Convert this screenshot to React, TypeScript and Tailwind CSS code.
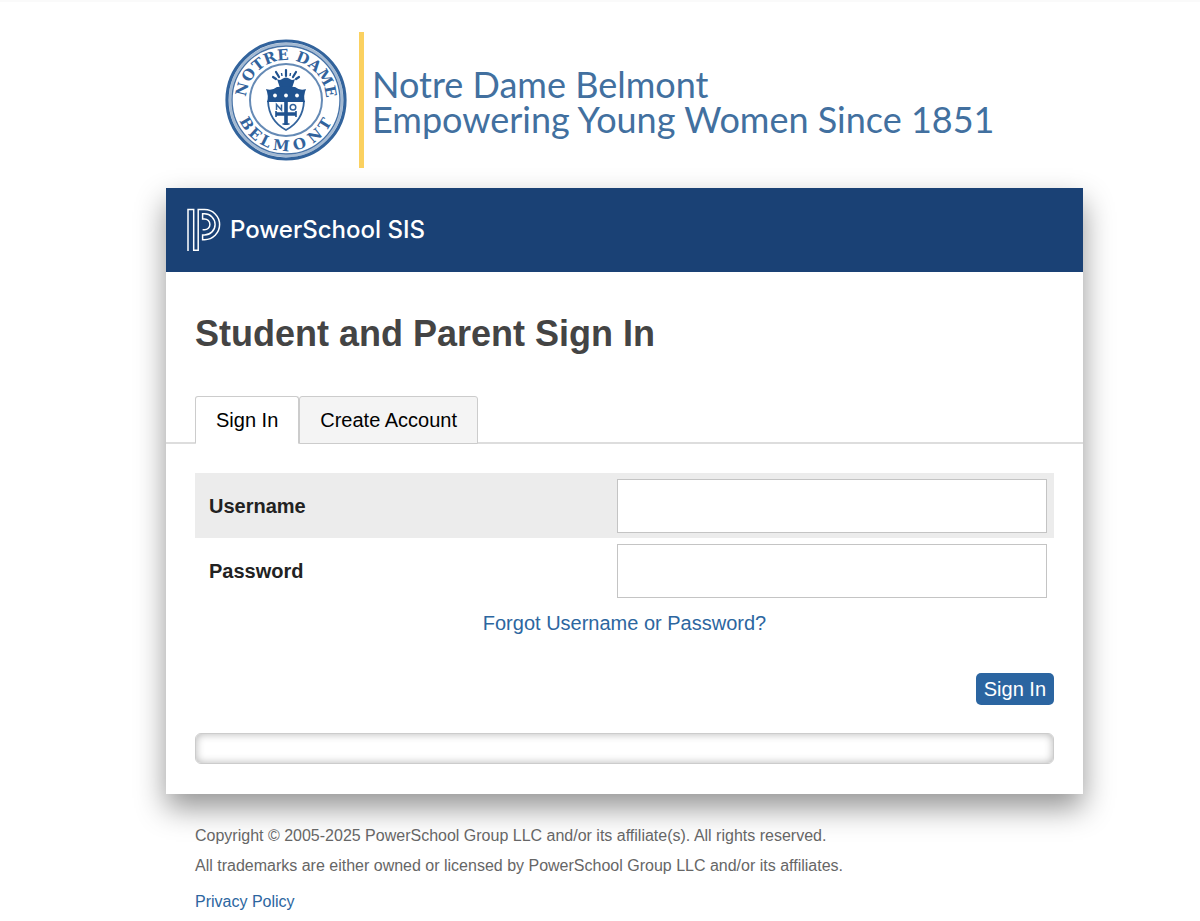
import React, { useState } from "react";

const TABS = ["Sign In", "Create Account"];

// Letters round the school seal, each with its angle in degrees
const SEAL_TOP = [
  { char: "N", angle: -76 },
  { char: "O", angle: -56 },
  { char: "T", angle: -38 },
  { char: "R", angle: -21 },
  { char: "E", angle: -4 },
  { char: "D", angle: 22 },
  { char: "A", angle: 40 },
  { char: "M", angle: 60 },
  { char: "E", angle: 79 },
];

const SEAL_BOTTOM = [
  { char: "B", angle: 59 },
  { char: "E", angle: 42 },
  { char: "L", angle: 26 },
  { char: "M", angle: 6 },
  { char: "O", angle: -17 },
  { char: "N", angle: -39 },
  { char: "T", angle: -58 },
];

const SchoolSeal: React.FC = () => (
  <svg viewBox="-61 -61 122 122" className="h-[122px] w-[122px] shrink-0" role="img" aria-label="Notre Dame Belmont seal">
    <g fill="none" stroke="#32639c">
      <circle r="59" strokeWidth="3.2" />
      <circle r="56" strokeWidth="2.4" opacity="0.45" />
      <circle r="54" strokeWidth="1.4" opacity="0.9" />
      <circle r="36" strokeWidth="2" opacity="0.75" />
    </g>
    <g fill="#32639c" fontFamily="'DejaVu Serif', serif" fontSize="15" fontWeight="700" textAnchor="middle">
      {SEAL_TOP.map((l) => (
        <text key={l.angle} y="-40" transform={`rotate(${l.angle})`}>
          {l.char}
        </text>
      ))}
      {SEAL_BOTTOM.map((l) => (
        <text key={l.angle} y="51" transform={`rotate(${l.angle})`}>
          {l.char}
        </text>
      ))}
    </g>
    {/* Crown */}
    <path d="M-6 -12 L-9 -21 Q-6 -19 -4 -21 Q0 -24 4 -21 Q6 -19 9 -21 L6 -12 Z" fill="#1f528f" />
    <path
      d="M-10 -21 L-13 -23 M-7 -23 L-10 -28 M0 -24 V-30 M7 -23 L10 -28 M10 -21 L13 -23"
      stroke="#1f528f"
      strokeWidth="2.2"
      strokeLinecap="round"
    />
    <path d="M-4 -24 L-4.5 -27 M4 -24 L4.5 -27" stroke="#1f528f" strokeWidth="1.4" />
    {/* Shield */}
    <path d="M-18 1 Q-17 21 0 30 Q17 21 18 1" fill="#fff" stroke="#32639c" strokeWidth="1.8" />
    <path d="M-20 -11 Q-14 -9 -9 -13 Q0 -14 9 -13 Q14 -9 20 -11 Q17 -4 19 2 H-19 Q-17 -4 -20 -11 Z" fill="#1f528f" />
    <path d="M0 1 V25 M-10 14 H10" stroke="#1f528f" strokeWidth="3.6" />
    <path d="M-10 11 V17 M10 11 V17 M-3.5 24 H3.5" stroke="#1f528f" strokeWidth="1.6" />
    <path d="M-9.5 10 V4.5 L-4.5 10 V4.5" fill="none" stroke="#32639c" strokeWidth="1.5" />
    <circle cx="7" cy="7.2" r="2.8" fill="none" stroke="#32639c" strokeWidth="1.5" />
    <g fill="#fff">
      <circle cx="-11" cy="-4.5" r="1.9" />
      <circle cy="-4.5" r="1.9" />
      <circle cx="11" cy="-4.5" r="1.9" />
    </g>
  </svg>
);

const PowerSchoolMark: React.FC = () => (
  <svg viewBox="0 0 36 44" className="h-11 w-9" fill="none" stroke="#fff" strokeWidth="1.5" aria-hidden="true">
    <path d="M2 43 V1.5 H7.7 V42.2 H12.2 V1.5 H18.5 A15.1 15.1 0 0 1 18.5 31.7 H16.6 V27 H18.5 A10.6 10.6 0 0 0 18.5 5.8 H16.6 V11 H18.5 A5.4 5.4 0 0 1 18.5 21.8 H16.6" />
  </svg>
);

export default function App() {
  const [activeTab, setActiveTab] = useState("Sign In");
  const [username, setUsername] = useState("");
  const [password, setPassword] = useState("");

  return (
    <div className="min-h-screen border-t-2 border-[#fafafa] bg-white pl-[49px] font-['Liberation_Sans',Arial,sans-serif] text-xl text-black">
      <div className="mx-auto max-w-[917px]">
        {/* School banner */}
        <header className="flex items-center pt-[30px] pl-[59px]">
          <SchoolSeal />
          <div className="ml-3 h-[136px] w-[5px] shrink-0 bg-[#fbd160]" />
          <p className="ml-2 pt-1 font-['Lato',sans-serif] text-[36px] leading-[35px] text-[#42709f]">
            Notre Dame Belmont
            <br />
            Empowering Young Women Since 1851
          </p>
        </header>

        {/* Sign in card */}
        <main className="mt-5 bg-white pb-[30px] shadow-[0_14px_28px_rgba(0,0,0,0.42)]">
          <div className="flex h-[84px] items-center gap-2 bg-[#1a4175] pl-5 text-white">
            <PowerSchoolMark />
            <span className="font-['Inter',sans-serif] text-2xl font-medium">PowerSchool SIS</span>
          </div>

          <h1 className="px-[29px] pt-10 text-[36px] leading-[44px] font-bold text-[#444]">
            Student and Parent Sign In
          </h1>

          <div className="mt-10 flex border-b-2 border-[#ddd] px-[29px]" role="tablist">
            {TABS.map((tab) => (
              <button
                key={tab}
                role="tab"
                aria-selected={activeTab === tab}
                onClick={() => setActiveTab(tab)}
                className={`-mb-[2px] h-12 cursor-pointer rounded-t-[3px] border px-5 ${
                  activeTab === tab
                    ? "border-[#ccc] border-b-white bg-white"
                    : "border-[#ccc] bg-[#f4f4f4]"
                }`}
              >
                {tab}
              </button>
            ))}
          </div>

          <form className="px-[29px] pt-[29px]" onSubmit={(e) => e.preventDefault()}>
            <div className="flex h-[65px] items-center justify-between bg-[#ececec] pr-[7px] pl-[14px]">
              <label htmlFor="username" className="font-bold text-[#222]">
                Username
              </label>
              <input
                id="username"
                type="text"
                value={username}
                onChange={(e) => setUsername(e.target.value)}
                className="h-[54px] min-w-0 basis-[430px] border border-[#c4c4c4] bg-white px-3 outline-none"
              />
            </div>
            <div className="flex h-[65px] items-center justify-between pr-[7px] pl-[14px]">
              <label htmlFor="password" className="font-bold text-[#222]">
                Password
              </label>
              <input
                id="password"
                type="password"
                value={password}
                onChange={(e) => setPassword(e.target.value)}
                className="h-[54px] min-w-0 basis-[430px] border border-[#c4c4c4] bg-white px-3 outline-none"
              />
            </div>

            <div className="pt-[6px] text-center">
              <a href="#forgot" className="text-[#2c66a0]">
                Forgot Username or Password?
              </a>
            </div>

            <div className="flex justify-end pt-9">
              <button type="submit" className="h-8 cursor-pointer rounded-[5px] bg-[#2b65a1] px-2 text-white">
                Sign In
              </button>
            </div>
          </form>

          <div className="mx-[29px] mt-7 h-[31px] rounded-[6px] border border-[#ccc] shadow-[inset_0_0_8px_rgba(0,0,0,0.3)]" />
        </main>

        <footer className="px-[29px] pt-[27px] text-base leading-[30px] text-[#666]">
          <p>Copyright © 2005-2025 PowerSchool Group LLC and/or its affiliate(s). All rights reserved.</p>
          <p>All trademarks are either owned or licensed by PowerSchool Group LLC and/or its affiliates.</p>
          <p className="pt-[6px]">
            <a href="#privacy" className="text-[#2c66a0]">
              Privacy Policy
            </a>
          </p>
        </footer>
      </div>
    </div>
  );
}
